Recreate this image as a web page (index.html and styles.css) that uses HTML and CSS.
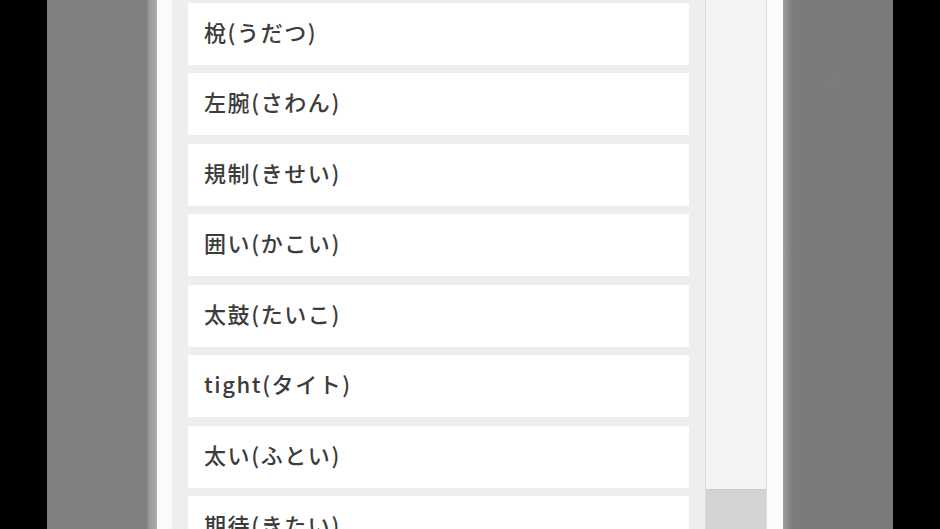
FILE: index.html
```html
<!DOCTYPE html>
<html lang="ja">
<head>
<meta charset="utf-8">
<title>単語リスト</title>
<link rel="stylesheet" href="styles.css">
</head>
<body>
<div class="stage">
  <div class="side side-left">
    <span class="speck speck-green" style="left:10px;top:76px"></span>
    <span class="speck speck-orange" style="left:51px;top:71px"></span>
  </div>
  <div class="edge edge-left"></div>
  <div class="modal">
    <div class="list">
      <div class="item">梲(うだつ)</div>
      <div class="item">左腕(さわん)</div>
      <div class="item">規制(きせい)</div>
      <div class="item">囲い(かこい)</div>
      <div class="item">太鼓(たいこ)</div>
      <div class="item">tight(タイト)</div>
      <div class="item">太い(ふとい)</div>
      <div class="item">期待(きたい)</div>
    </div>
    <div class="scrollbar">
      <div class="thumb"></div>
    </div>
  </div>
  <div class="edge edge-right"></div>
  <div class="side side-right">
    <span class="speck speck-purple" style="left:44px;top:78px"></span>
    <span class="speck speck-green2" style="left:37px;top:84px"></span>
  </div>
</div>
</body>
</html>
```

FILE: styles.css
```css
html, body {
  margin: 0;
  padding: 0;
  background: #000;
  height: 529px;
  overflow: hidden;
}

.stage {
  display: flex;
  margin: 0 47px;
  height: 529px;
  background: #7f7f7f;
}

.side {
  position: relative;
  background: #808080;
}

.side-left {
  width: 100px;
}

.side-right {
  width: 100px;
  background: #7b7b7b;
}

.edge {
  width: 10px;
}

.edge-left {
  background: linear-gradient(to right, #8a8a8a 0, #9b9b9b 30%, #a3a3a3 70%, #b0b0b0 100%);
}

.edge-right {
  background: linear-gradient(to right, #a0a0a0 0, #939393 30%, #868686 70%, #7d7d7d 100%);
}

.speck {
  position: absolute;
  width: 4px;
  height: 4px;
  border-radius: 2px;
  opacity: 0.6;
}

.speck-green { background: #5fa05f; }
.speck-orange { background: #b07050; }
.speck-purple { background: #9a6a9a; width: 3px; height: 3px; }
.speck-green2 { background: #6a9a6a; width: 3px; height: 3px; }

.modal {
  display: flex;
  width: 626px;
  background: #fbfbfb;
  padding-left: 15px;
  padding-right: 16px;
  box-sizing: border-box;
}

.list {
  width: 533px;
  background: #eeeeee;
  padding: 3px 16px 0 16px;
  box-sizing: border-box;
  overflow: hidden;
}

.item {
  height: 62px;
  margin-bottom: 8.43px;
  background: #ffffff;
  display: flex;
  align-items: center;
  padding-left: 16px;
  padding-bottom: 6px;
  box-sizing: border-box;
  font-family: "Noto Sans CJK JP", "Noto Sans", sans-serif;
  font-size: 22px;
  line-height: 22px;
  font-weight: 500;
  color: #3c3c3c;
  letter-spacing: 1.6px;
}

.scrollbar {
  width: 62px;
  position: relative;
  background: #f4f4f4;
  border-left: 1px solid #dcdcdc;
  border-right: 1px solid #dcdcdc;
  box-sizing: border-box;
  display: flex;
  flex-direction: column;
  padding-top: 489px;
}

.thumb {
  flex: 1;
  background: #d4d4d4;
  border-top: 1px solid #c8c8c8;
}
```
